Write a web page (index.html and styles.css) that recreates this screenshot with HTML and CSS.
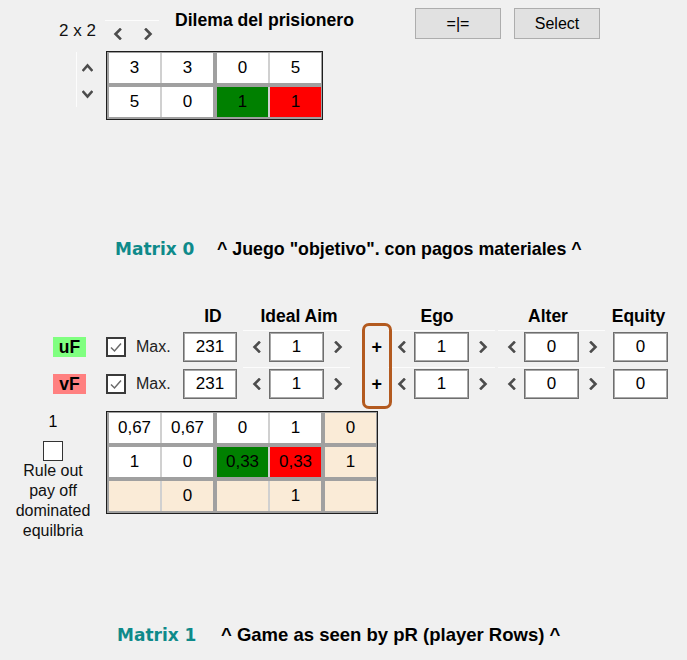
FILE: index.html
```html
<!DOCTYPE html>
<html lang="es">
<head>
<meta charset="utf-8">
<title>Dilema del prisionero</title>
<link rel="stylesheet" href="styles.css">
</head>
<body>
<main class="form">
  <header class="top">
    <span class="dims">2 x 2</span>
    <div class="hspin">
      <svg class="chev" viewBox="0 0 10 12"><polyline points="7,1.5 2.5,6 7,10.5"/></svg>
      <svg class="chev" viewBox="0 0 10 12"><polyline points="3,1.5 7.5,6 3,10.5"/></svg>
    </div>
    <h1 class="title">Dilema del prisionero</h1>
    <div class="actions">
      <button class="btn" type="button">=|=</button>
      <button class="btn" type="button">Select</button>
    </div>
  </header>

  <section class="board">
    <div class="vspin">
      <svg class="chev-v" viewBox="0 0 11 9"><polyline points="1.5,7 5.5,2.5 9.5,7"/></svg>
      <svg class="chev-v" viewBox="0 0 11 9"><polyline points="1.5,2 5.5,6.5 9.5,2"/></svg>
    </div>
    <div class="matrix">
      <div class="mrow">
        <div class="pair"><div class="cell">3</div><div class="cell">3</div></div>
        <div class="pair"><div class="cell">0</div><div class="cell">5</div></div>
      </div>
      <div class="mrow">
        <div class="pair"><div class="cell">5</div><div class="cell">0</div></div>
        <div class="pair"><div class="cell green">1</div><div class="cell red">1</div></div>
      </div>
    </div>
  </section>

  <p class="caption cap0"><span class="mname">Matrix 0</span><span class="mdesc">^ Juego "objetivo". con pagos materiales ^</span></p>

  <section class="panel">
    <div class="heads">
      <span class="h h-id">ID</span>
      <span class="h h-ideal">Ideal Aim</span>
      <span class="h h-ego">Ego</span>
      <span class="h h-alter">Alter</span>
      <span class="h h-eq">Equity</span>
    </div>

    <div class="prow">
      <span class="tag tag-u">uF</span>
      <span class="check"><svg viewBox="0 0 16 16"><polyline points="3,8.5 6.5,12 13,4.5"/></svg></span>
      <span class="max">Max.</span>
      <span class="field f-id">231</span>
      <div class="spin s-ideal">
        <svg class="chev" viewBox="0 0 10 12"><polyline points="7,1.5 2.5,6 7,10.5"/></svg>
        <span class="field">1</span>
        <svg class="chev" viewBox="0 0 10 12"><polyline points="3,1.5 7.5,6 3,10.5"/></svg>
      </div>
      <span class="plus">+</span>
      <div class="spin s-ego">
        <svg class="chev" viewBox="0 0 10 12"><polyline points="7,1.5 2.5,6 7,10.5"/></svg>
        <span class="field">1</span>
        <svg class="chev" viewBox="0 0 10 12"><polyline points="3,1.5 7.5,6 3,10.5"/></svg>
      </div>
      <div class="spin s-alter">
        <svg class="chev" viewBox="0 0 10 12"><polyline points="7,1.5 2.5,6 7,10.5"/></svg>
        <span class="field">0</span>
        <svg class="chev" viewBox="0 0 10 12"><polyline points="3,1.5 7.5,6 3,10.5"/></svg>
      </div>
      <span class="field f-eq">0</span>
    </div>

    <div class="prow prow-2">
      <span class="tag tag-v">vF</span>
      <span class="check"><svg viewBox="0 0 16 16"><polyline points="3,8.5 6.5,12 13,4.5"/></svg></span>
      <span class="max">Max.</span>
      <span class="field f-id">231</span>
      <div class="spin s-ideal">
        <svg class="chev" viewBox="0 0 10 12"><polyline points="7,1.5 2.5,6 7,10.5"/></svg>
        <span class="field">1</span>
        <svg class="chev" viewBox="0 0 10 12"><polyline points="3,1.5 7.5,6 3,10.5"/></svg>
      </div>
      <span class="plus">+</span>
      <div class="spin s-ego">
        <svg class="chev" viewBox="0 0 10 12"><polyline points="7,1.5 2.5,6 7,10.5"/></svg>
        <span class="field">1</span>
        <svg class="chev" viewBox="0 0 10 12"><polyline points="3,1.5 7.5,6 3,10.5"/></svg>
      </div>
      <div class="spin s-alter">
        <svg class="chev" viewBox="0 0 10 12"><polyline points="7,1.5 2.5,6 7,10.5"/></svg>
        <span class="field">0</span>
        <svg class="chev" viewBox="0 0 10 12"><polyline points="3,1.5 7.5,6 3,10.5"/></svg>
      </div>
      <span class="field f-eq">0</span>
    </div>

    <div class="highlight"></div>
  </section>

  <section class="board board-lower">
    <div class="rule">
      <div class="rule-n">1</div>
      <span class="box"></span>
      <p class="rule-text">Rule out<br>pay off<br>dominated<br>equilbria</p>
    </div>
    <div class="matrix">
      <div class="mrow">
        <div class="pair"><div class="cell">0,67</div><div class="cell">0,67</div></div>
        <div class="pair"><div class="cell">0</div><div class="cell">1</div></div>
        <div class="pair"><div class="cell beige">0</div></div>
      </div>
      <div class="mrow">
        <div class="pair"><div class="cell">1</div><div class="cell">0</div></div>
        <div class="pair"><div class="cell green">0,33</div><div class="cell red">0,33</div></div>
        <div class="pair"><div class="cell beige">1</div></div>
      </div>
      <div class="mrow">
        <div class="pair"><div class="cell beige"></div><div class="cell beige">0</div></div>
        <div class="pair"><div class="cell beige"></div><div class="cell beige">1</div></div>
        <div class="pair"><div class="cell beige"></div></div>
      </div>
    </div>
  </section>

  <p class="caption cap1"><span class="mname">Matrix 1</span><span class="mdesc">^ Game as seen by pR (player Rows) ^</span></p>
</main>
</body>
</html>
```

FILE: styles.css
```css
* { box-sizing: border-box; }

html, body {
  margin: 0;
  background: #f0f0f0;
}

body {
  font-family: "Liberation Sans", Arial, sans-serif;
  color: #000;
  width: 687px;
  height: 660px;
  overflow: hidden;
}

.form { display: block; }

/* ---------- top bar ---------- */
.top {
  display: flex;
  align-items: flex-start;
  height: 51px;
}

.dims {
  margin: 21px 0 0 59px;
  width: 46px;
  font-size: 17px;
  line-height: 20px;
  color: #111;
}

.hspin {
  margin-top: 20px;
  width: 54px;
  height: 24px;
  border-top: 1px solid #fcfcfc;
  display: flex;
  gap: 20px;
  padding-left: 8px;
}

.hspin .chev { margin-top: 7px; }

.chev {
  width: 10px;
  height: 12px;
  flex-shrink: 0;
}

.chev polyline,
.chev-v polyline {
  fill: none;
  stroke: #4c4c4c;
  stroke-width: 2.6;
  stroke-linecap: square;
  stroke-linejoin: miter;
}

.title {
  margin: 10px 0 0 16px;
  font-size: 17.6px;
  line-height: 20px;
  font-weight: bold;
}

.actions {
  margin: 8px 87px 0 auto;
  display: flex;
  gap: 13px;
}

.btn {
  width: 86px;
  height: 31px;
  padding: 0;
  background: #e1e1e1;
  border: 1px solid #adadad;
  font-family: "Liberation Sans", Arial, sans-serif;
  font-size: 16px;
  color: #000;
}

/* ---------- matrices ---------- */
.board {
  display: flex;
  align-items: flex-start;
}

.vspin {
  margin: 1px 0 0 76px;
  width: 30px;
  height: 55px;
  border-left: 1px solid #fcfcfc;
  display: flex;
  flex-direction: column;
  gap: 18px;
  padding: 11px 0 0 5px;
}

.chev-v {
  width: 11px;
  height: 9px;
}

.matrix {
  border: 1px solid #1e1e1e;
  background: #a0a0a0;
  padding: 1px 1px 2px 2px;
  display: flex;
  flex-direction: column;
  gap: 4px;
}

.mrow {
  display: flex;
  gap: 4px;
}

.pair {
  display: flex;
  gap: 2px;
  background: #d0d0d0;
}

.cell {
  width: 51px;
  height: 30px;
  background: #fff;
  display: flex;
  align-items: center;
  justify-content: center;
  font-size: 17px;
}

.cell.green { background: #008000; }
.cell.red { background: #ff0000; }
.cell.beige { background: #faebd7; }

/* ---------- captions ---------- */
.caption {
  margin: 0;
  display: flex;
  align-items: baseline;
  height: 24px;
  font-weight: bold;
}

.cap0 { margin: 117px 0 0 115px; }
.cap1 { margin: 82px 0 0 117px; }

.mname {
  font-family: "DejaVu Sans", sans-serif;
  font-size: 17px;
  line-height: 24px;
  color: #0e8a8a;
}

.cap0 .mname { width: 102px; }
.cap1 .mname { width: 104px; }

.mdesc {
  line-height: 24px;
  color: #000;
}

.cap0 .mdesc { font-size: 17.8px; }
.cap1 .mdesc { font-size: 18.5px; }

/* ---------- parameter panel ---------- */
.panel {
  position: relative;
  margin-top: 45px;
}

.heads {
  display: flex;
  height: 20px;
  padding-left: 193px;
}

.h {
  font-size: 17.5px;
  font-weight: bold;
  line-height: 20px;
  text-align: center;
  white-space: nowrap;
}

.h-id { width: 40px; }
.h-ideal { width: 132px; }
.h-ego { width: 144px; }
.h-alter { width: 78px; }
.h-eq { width: 77px; margin-left: 13px; }

.prow {
  display: flex;
  align-items: flex-end;
  height: 32px;
  margin-top: 4px;
  padding-left: 53px;
}

.prow-2 { margin-top: 5px; }

.tag {
  width: 33px;
  height: 20px;
  margin: 0 20px 5px 0;
  font-size: 17.5px;
  font-weight: bold;
  line-height: 20px;
  text-align: center;
}

.tag-u { background: #80ff80; }
.tag-v { background: #ff8080; }

.check {
  width: 20px;
  height: 20px;
  margin: 0 10px 5px 0;
  border: 2px solid #3a3a3a;
  background: #fff;
  display: flex;
}

.check svg {
  width: 16px;
  height: 16px;
}

.check polyline {
  fill: none;
  stroke: #6a6a6a;
  stroke-width: 1.5;
}

.max {
  width: 47px;
  font-size: 16px;
  line-height: 30px;
  color: #222;
}

.field {
  width: 55px;
  height: 30px;
  background: #fff;
  border: 1px solid #6e6e6e;
  box-shadow: inset 0 0 0 1px #a8a8a8;
  display: flex;
  align-items: center;
  justify-content: center;
  font-size: 17px;
  flex-shrink: 0;
}

.f-id {
  width: 54px;
  margin-right: 6px;
}

.spin {
  width: 107px;
  height: 32px;
  border-top: 1px solid #fcfcfc;
  padding: 1px 2px 0 4px;
  display: flex;
  align-items: center;
}

.spin .chev {
  padding: 0 5px;
  box-sizing: content-box;
  width: 10px;
}

.spin .field { margin: 0 4px 0 2px; }

.s-alter { margin: 0 8px 0 3px; }

.plus {
  width: 38px;
  padding-right: 6px;
  text-align: right;
  font-size: 18px;
  font-weight: bold;
  line-height: 30px;
}

.highlight {
  position: absolute;
  left: 362px;
  top: 17px;
  width: 30px;
  height: 86px;
  border: 3px solid #b35a1f;
  border-radius: 7px;
}

/* ---------- lower matrix ---------- */
.board-lower { margin-top: 12px; }

.rule {
  width: 106px;
  flex-shrink: 0;
  text-align: center;
  font-size: 16px;
  line-height: 20px;
}

.rule-n { margin-top: 1px; }

.box {
  display: block;
  width: 20px;
  height: 20px;
  margin: 9px auto 0;
  border: 1.5px solid #333;
  background: #fff;
}

.rule-text {
  margin: 0;
  color: #111;
}
```
